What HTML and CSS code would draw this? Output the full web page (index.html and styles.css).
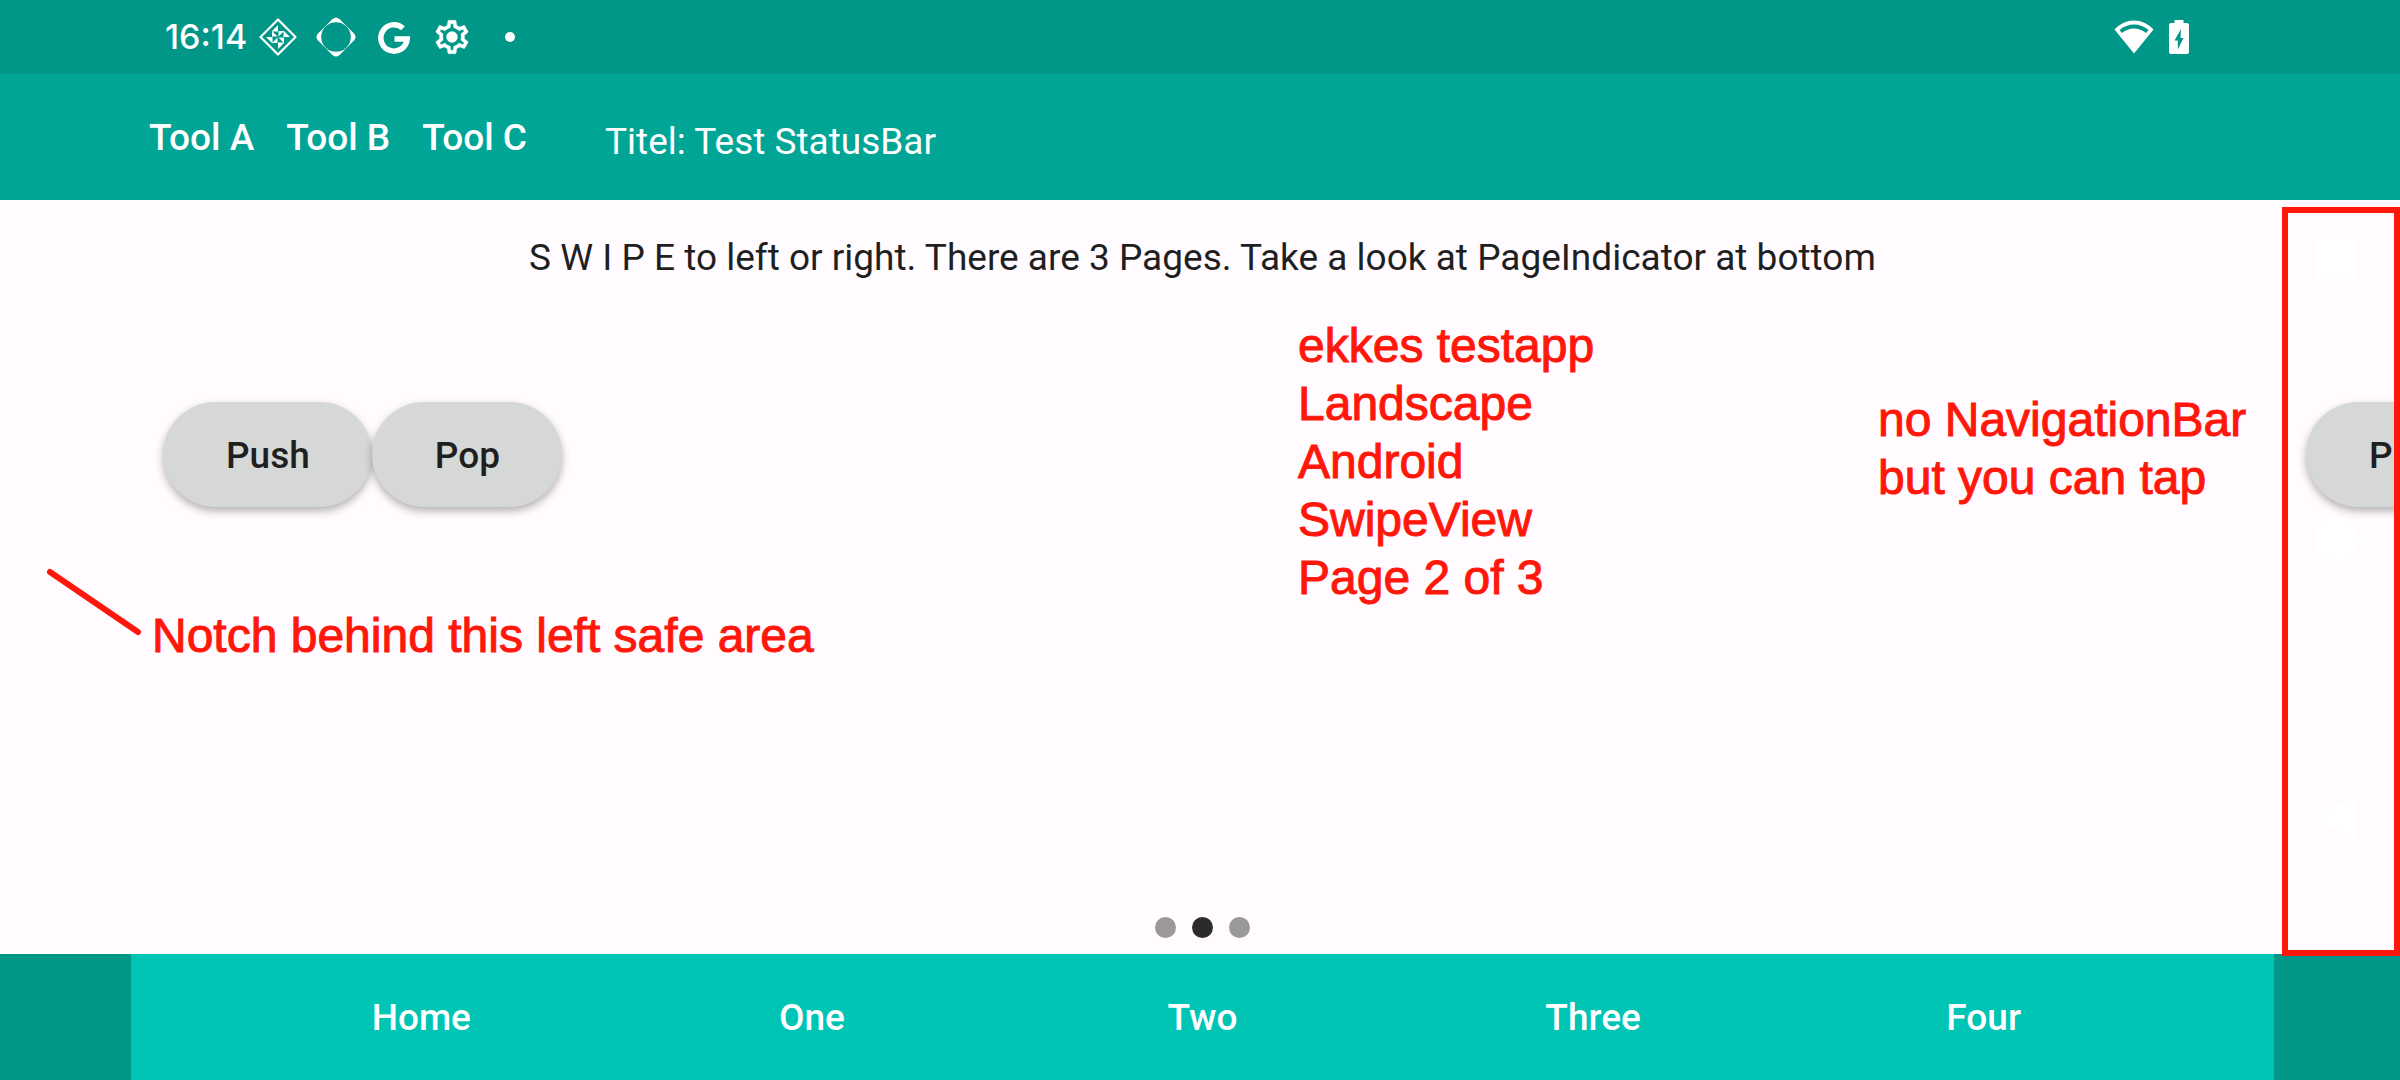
FILE: index.html
```html
<!DOCTYPE html>
<html lang="en">
<head>
<meta charset="UTF-8">
<meta name="viewport" content="width=device-width, initial-scale=1.0">
<title>Test StatusBar</title>
<link rel="stylesheet" href="styles.css">
</head>
<body>
    <div class="status-bar">
        <span class="clock">16:14</span>
        <div class="status-icons">
            <svg width="40" height="40" viewBox="0 0 40 40">
                <path d="M20 2.500 L37.500 20 L20 37.500 L2.500 20 Z" fill="none" stroke="#fff" stroke-width="2.200" stroke-linejoin="round"/>
                <path d="M20 8v6.500h-6.500zM32 20h-6.500v-6.500zM20 32v-6.500h6.500zM8 20h6.500v6.500z" fill="#fff"/>
                <path d="M20.500 14h5.500l-5.500 5.500zM26 20.500v5.500l-5.500-5.500zM19.500 26h-5.500l5.500-5.500zM14 19.500v-5.500l5.500 5.500z" fill="#fff"/>
            </svg>
            <svg width="40" height="40" viewBox="0 0 40 40">
                <path d="M16.500 2 Q20 -1 23.500 2 L38 16.500 Q41 20 38 23.500 L23.500 38 Q20 41 16.500 38 L2 23.500 Q-1 20 2 16.500 Z" fill="#fff"/>
                <circle cx="20" cy="20" r="14.800" fill="#009688"/>
            </svg>
            <svg width="40" height="40" viewBox="0 0 40 40">
                <path d="M29 11.200A13.200 13.200 0 1 0 33.200 22H20.500" fill="none" stroke="#fff" stroke-width="5.500"/>
            </svg>
            <svg width="40" height="40" viewBox="0 0 24 24">
                <path fill="#fff" stroke="#fff" stroke-width=".2" d="M19.430 12.980c.04-.32.070-.64.070-.98s-.03-.66-.07-.98l2.110-1.650c.19-.15.240-.42.120-.64l-2-3.460c-.12-.22-.39-.3-.61-.22l-2.490 1c-.52-.4-1.080-.73-1.690-.98l-.38-2.650C14.460 2.180 14.250 2 14 2h-4c-.25 0-.46.180-.49.420l-.38 2.650c-.61.250-1.170.590-1.690.980l-2.490-1c-.23-.09-.49 0-.61.220l-2 3.460c-.13.220-.07.490.120.640l2.110 1.650c-.04.320-.07.650-.07.980s.03.660.070.980l-2.110 1.650c-.19.150-.24.420-.12.640l2 3.460c.12.220.39.300.61.220l2.490-1c.52.400 1.080.730 1.690.980l.38 2.650c.03.240.240.420.490.420h4c.25 0 .46-.18.490-.42l.38-2.650c.61-.25 1.170-.59 1.690-.98l2.490 1c.23.090.490 0 .61-.22l2-3.460c.12-.22.070-.49-.12-.64zm-1.980-1.710c.04.310.050.520.050.730s-.02.430-.05.730l-.14 1.130.89.700 1.080.840-.7 1.210-1.270-.51-1.040-.42-.9.680c-.43.320-.84.560-1.250.730l-1.060.430-.16 1.130-.2 1.350h-1.400l-.19-1.350-.16-1.130-1.060-.43c-.43-.18-.83-.41-1.230-.71l-.91-.7-1.060.430-1.270.510-.7-1.210 1.080-.84.890-.7-.14-1.130c-.03-.31-.05-.54-.05-.74s.02-.43.050-.73l.14-1.130-.89-.7-1.080-.84.700-1.210 1.270.510 1.040.420.900-.68c.43-.32.840-.56 1.250-.73l1.060-.43.160-1.130.2-1.350h1.390l.19 1.350.16 1.130 1.060.430c.43.180.830.410 1.230.710l.91.700 1.060-.43 1.270-.51.700 1.210-1.070.850-.89.700z"/>
                <circle cx="12" cy="12" r="3.400" fill="#fff"/>
            </svg>
        </div>
        <span class="more-dot"></span>
        <div class="system-icons">
            <svg width="40" height="34" viewBox="0 0 40 34">
                <path d="M20 33.500 L.5 9.500 Q9 .5 20 .5 T39.500 9.500 Z" fill="#fff"/>
                <path d="M5.500 10 Q12 4.500 20 4.500 T34.500 10 L32 13 Q26.500 8.500 20 8.500 T8 13 Z" fill="#009688"/>
            </svg>
            <svg width="20" height="34" viewBox="0 0 20 34">
                <path d="M5.500 0h9v3H18a2 2 0 0 1 2 2v27a2 2 0 0 1-2 2H2a2 2 0 0 1-2-2V5a2 2 0 0 1 2-2h3.500z" fill="#fff"/>
                <path d="M12 9L5.500 20.500h3.300V29.500L14.500 18H11.500z" fill="#009688"/>
            </svg>
        </div>
    </div>

    <header class="toolbar">
        <button class="tool">Tool A</button>
        <button class="tool">Tool B</button>
        <button class="tool">Tool C</button>
        <h1 class="title">Titel: Test StatusBar</h1>
    </header>

    <main class="content">
        <div class="swipe-view">
            <section class="page">
                <p class="hint">S W I P E to left or right. There are 3 Pages. Take a look at PageIndicator at bottom</p>
                <div class="buttons">
                    <button class="btn">Push</button>
                    <button class="btn">Pop</button>
                </div>
            </section>
            <!-- next page, its left edge shows in the safe area -->
            <section class="page next-page">
                <div class="buttons">
                    <button class="btn">Push</button>
                </div>
            </section>
        </div>

        <div class="page-indicator">
            <span class="dot"></span>
            <span class="dot current"></span>
            <span class="dot"></span>
        </div>

        <!-- notes on top of the app -->
        <p class="note note-app">ekkes testapp<br>Landscape<br>Android<br>SwipeView<br>Page 2 of 3</p>
        <p class="note note-nav">no NavigationBar<br>but you can tap</p>
        <p class="note note-notch">Notch behind this left safe area</p>
        <svg class="notch-line" width="100" height="72" viewBox="0 0 100 72">
            <path d="M5 5L93 65" stroke="#ff170b" stroke-width="6" stroke-linecap="round"/>
        </svg>
        <div class="nav-frame">
            <svg width="44" height="44" viewBox="0 0 44 44"><rect x="2" y="2" width="40" height="40" rx="3" fill="#fff"/></svg>
            <svg width="44" height="44" viewBox="0 0 44 44"><circle cx="22" cy="22" r="22" fill="#fff"/></svg>
            <svg width="44" height="44" viewBox="0 0 44 44"><path d="M3 20L37 1Q41 0 41 4V40Q41 44 37 43L3 24Q1 22 3 20z" fill="#fff"/></svg>
        </div>
    </main>

    <nav class="tab-bar">
        <a class="tab" href="#home">Home</a>
        <a class="tab" href="#one">One</a>
        <a class="tab" href="#two">Two</a>
        <a class="tab" href="#three">Three</a>
        <a class="tab" href="#four">Four</a>
    </nav>
</body>
</html>
```
FILE: styles.css
```css
*{
    box-sizing: border-box;
}
body{
    margin: 0;
    min-height: 100vh;
    display: flex;
    flex-direction: column;
    background: #fffbff;
    color: #1f1f1f;
    font-family: Roboto, sans-serif;
    font-size: 37px;
    line-height: 44px;
    overflow-x: hidden;
}
h1, p{
    margin: 0;
    font-size: 37px;
    font-weight: 400;
}
button{
    border: 0;
    padding: 2px 0 0;
    background: none;
    color: inherit;
    font: inherit;
    font-weight: 500;
    cursor: pointer;
}
svg{
    display: block;
}

/* status bar */
.status-bar{
    display: flex;
    align-items: center;
    height: 74px;
    padding: 0 211px 0 165px;
    background: #009688;
    color: #fff;
}
.clock{
    width: 93px;
    font-family: Inter, sans-serif;
    font-size: 34px;
    font-weight: 500;
}
.status-icons{
    display: flex;
    gap: 18px;
}
.more-dot{
    width: 10px;
    height: 10px;
    margin-left: 33px;
    border-radius: 50%;
    background: #fff;
}
.system-icons{
    display: flex;
    gap: 15px;
    margin-left: auto;
}

/* toolbar */
.toolbar{
    display: flex;
    align-items: center;
    gap: 32px;
    height: 126px;
    padding: 0 149px;
    background: #00a595;
    color: #fff;
}
.title{
    margin-left: 46px;
    padding-top: 10px;
}

/* pages */
.content{
    position: relative;
    z-index: 1;
    flex: 1;
    display: flex;
    flex-direction: column;
}
.swipe-view{
    flex: 1;
    display: flex;
    padding: 0 126px 0 131px;
    overflow: hidden;
}
.page{
    flex: 0 0 100%;
    padding: 36px 32px 0;
}
.hint{
    text-align: center;
}
.buttons{
    display: flex;
    margin-top: 122px;
}
.next-page{
    padding-top: 80px;
}
.btn{
    height: 105px;
    padding: 2px 62px 0 63px;
    border-radius: 53px;
    background: #d6d7d7;
    box-shadow: 0 4px 8px rgba(0, 0, 0, 0.3);
}
.page-indicator{
    display: flex;
    justify-content: center;
    gap: 16px;
    padding: 0 126px 16px 131px;
}
.dot{
    width: 21px;
    height: 21px;
    border-radius: 50%;
    background: #9a9899;
}
.dot.current{
    background: #2c2b2c;
}

/* notes */
.note{
    position: absolute;
    color: #ff170b;
    font-family: "Liberation Sans", Arial, sans-serif;
    font-size: 48px;
    line-height: 58px;
    white-space: nowrap;
    -webkit-text-stroke: 1px #ff170b;
}
.note-app{
    left: 1298px;
    top: 117px;
}
.note-nav{
    left: 1878px;
    top: 191px;
}
.note-notch{
    left: 152px;
    top: 407px;
}
.notch-line{
    position: absolute;
    left: 45px;
    top: 367px;
}
.nav-frame{
    position: absolute;
    right: 0;
    top: 7px;
    bottom: -2px;
    width: 118px;
    display: flex;
    flex-direction: column;
    align-items: center;
    gap: 236px;
    padding: 24px 8px 0 0;
    border: 6px solid #ff170b;
}

/* bottom tabs */
.tab-bar{
    display: flex;
    height: 126px;
    padding: 0 95px;
    border: solid #009688;
    border-width: 0 126px 0 131px;
    background: #00c4b4;
}
.tab{
    flex: 1;
    line-height: 128px;
    text-align: center;
    color: #fff;
    font-weight: 500;
    text-decoration: none;
}
```
